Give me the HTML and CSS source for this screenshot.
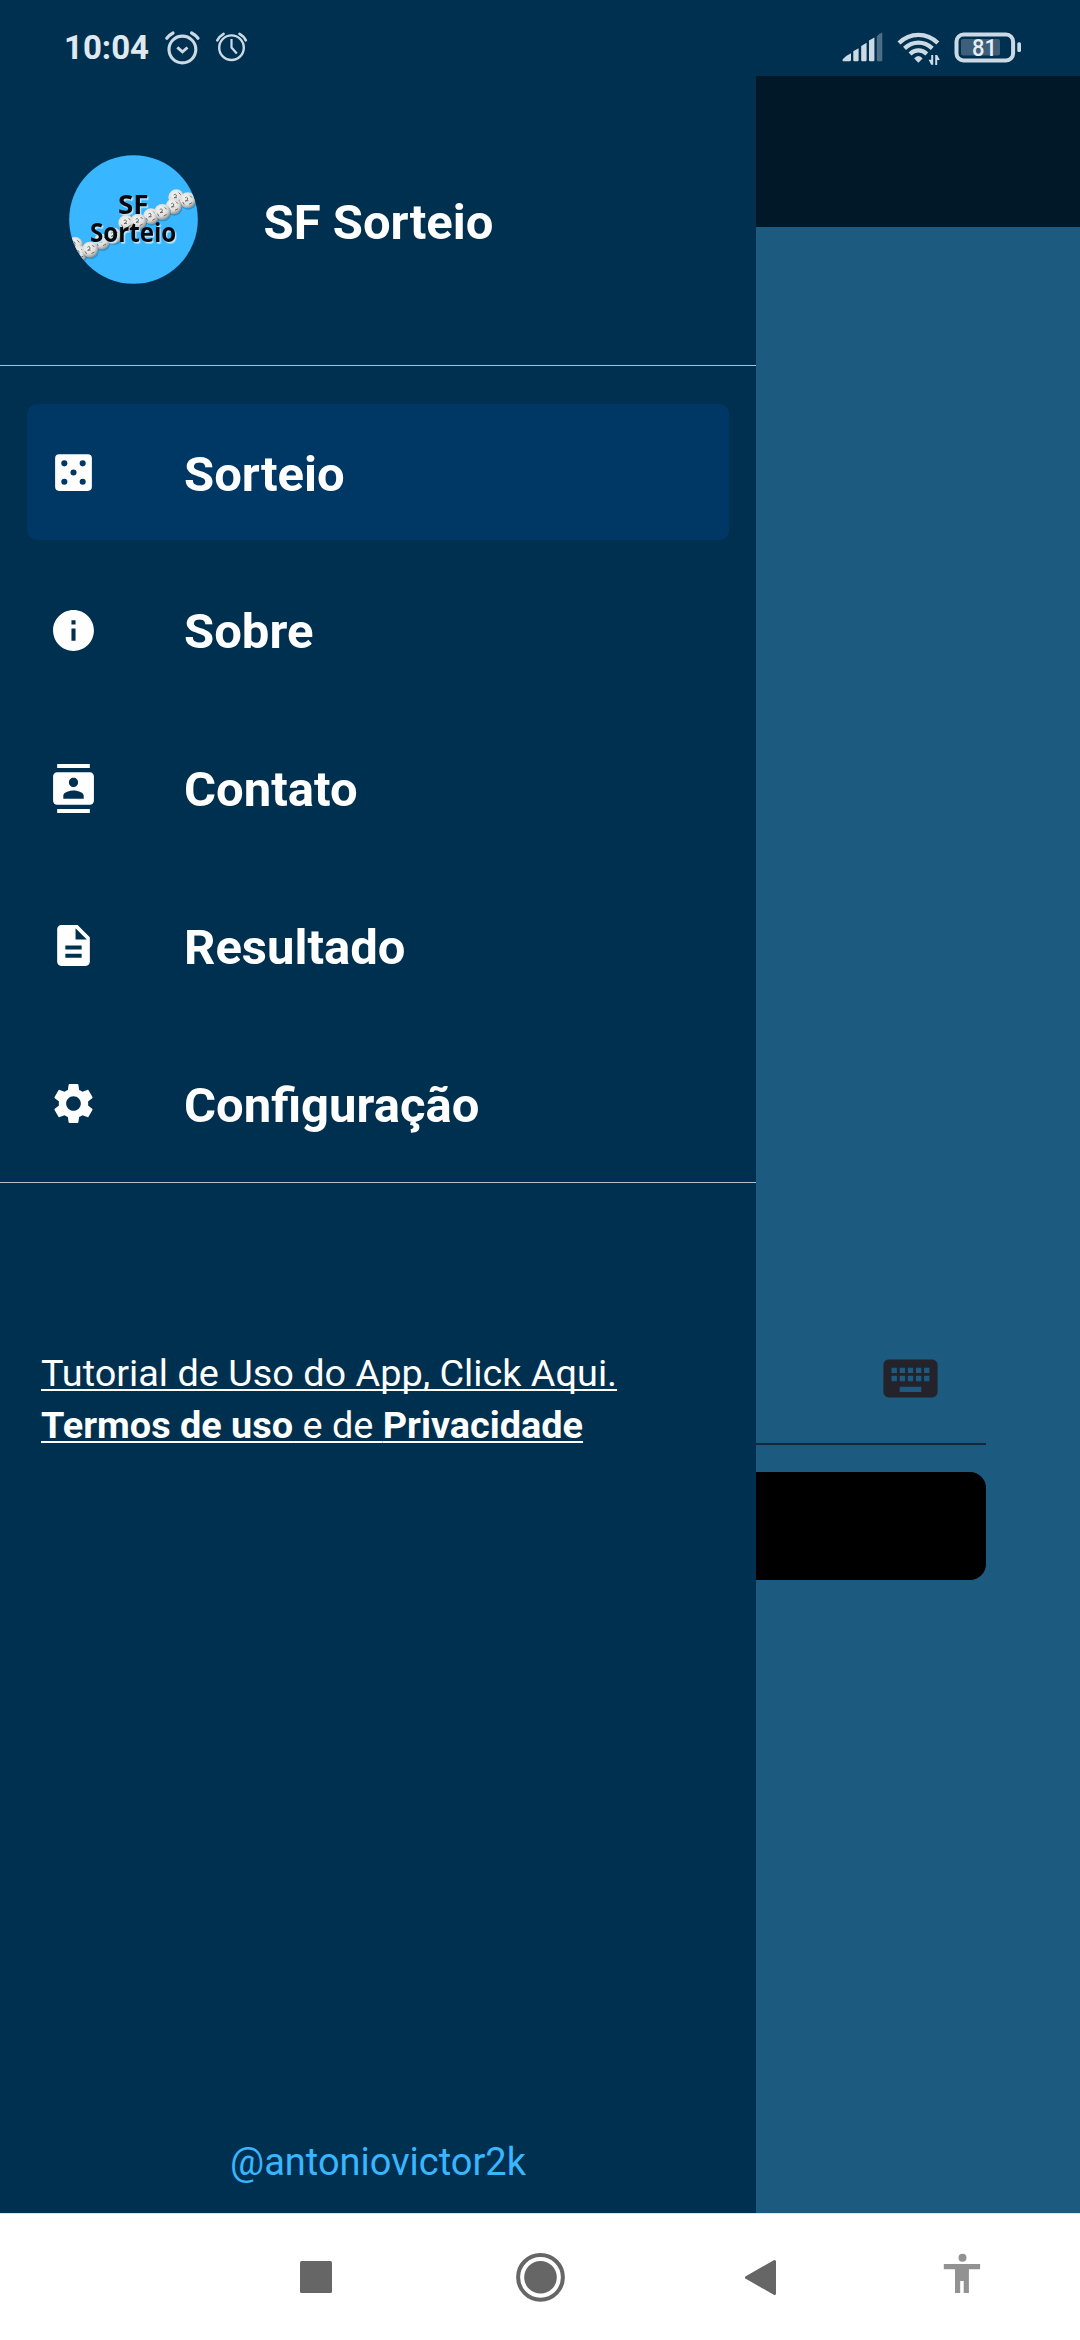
FILE: index.html
```html
<!DOCTYPE html>
<html lang="pt-BR">
<head>
<meta charset="utf-8">
<title>SF Sorteio</title>
<link rel="stylesheet" href="styles.css">
</head>
<body>
<header class="status">
  <span class="clock">10:04</span>
  <svg class="alarms" width="90" height="44" viewBox="160 26 90 44" fill="none" stroke="#ccdae5" stroke-linecap="round">
    <circle cx="182.4" cy="49.5" r="13.4" stroke-width="3.1"/>
    <path d="M177.3 47.3l5.2 4.5 5-4.3" stroke-width="2.9" stroke-linecap="butt"/>
    <path d="M166.8 38.3q2.6-3.4 6.2-5.3M191.6 33q4 2 6.4 5.3" stroke-width="3.2"/>
    <circle cx="231.5" cy="47.7" r="12.3" stroke-width="2.4"/>
    <path d="M231.5 39v8.5l5.3 6" stroke-width="2.2" stroke-linecap="butt"/>
    <path d="M217.3 40.4q2.2-4.2 6.3-6.5M239.5 33.9q4.4 2.3 6.3 6.5" stroke-width="2.6"/>
  </svg>
  <svg class="signals" width="186" height="44" viewBox="840 26 186 44" fill="#ccdae5">
    <path d="M842.7 61.3v-2.1q2.8-3.3 8.3-5.9v6.5q0 1.5-1.5 1.5z"/>
    <path d="M853.3 51.2l5.3-3v12q0 1.1-1 1.1h-3.3q-1 0-1-1.1zM861.2 46l5.4-3.2v17.4q0 1.1-1 1.1h-3.4q-1 0-1-1.1zM869 40.5l5.4-3v22.7q0 1.1-1 1.1h-3.4q-1 0-1-1.1z"/>
    <path d="M876.8 36.5q2.5-3.2 5.5-3.9v27.6q0 1.1-1 1.1h-3.5q-1 0-1-1.1z" fill="#4c6d86"/>
    <g fill="none" stroke="#ccdae5" stroke-width="4.2">
      <path d="M899 43q8.2-8.2 19.4-8.200t19.400 8.200"/>
      <path d="M904.500 48.400q6.200-5.700 13.900-5.700t13.900 5.700"/>
      <path d="M910 54q3.800-3.600 8.400-3.600t8.400 3.600"/>
    </g>
    <path d="M918.400 62.700l-4.200-4.200q1.500-2.600 4.200-2.600t4.200 2.600z"/>
    <path d="M931.200 55v9.800h2V55zM928.600 59.800l2.600 5v-5zM935.200 65h2V55h-2zM937.200 55v5h2.600z"/>
    <rect x="956.500" y="34.500" width="56.600" height="26" rx="7" fill="none" stroke="#ccdae5" stroke-width="4"/>
    <rect x="961" y="39" width="39" height="16.500" rx="2" fill="#3d5f7a"/>
    <rect x="1017.300" y="42.300" width="3.700" height="9.800" rx="1.500"/>
    <text x="972" y="56" class="charge" textLength="25" lengthAdjust="spacingAndGlyphs">81</text>
  </svg>
</header>

<main class="screen">
  <aside class="drawer">
    <div class="brand">
      <svg class="avatar" width="129" height="129" viewBox="0 0 387 387">
        <defs>
          <clipPath id="disc"><circle cx="193.500" cy="193.500" r="193"/></clipPath>
          <radialGradient id="shine" cx=".4" cy=".35" r=".65">
            <stop offset="0" stop-color="#f7f7f5"/><stop offset=".65" stop-color="#dcdcda"/><stop offset="1" stop-color="#929593"/>
          </radialGradient>
          <g id="ball"><circle r="24" cx="2" cy="4" fill="#174f75" opacity=".35"/><circle r="24" fill="url(#shine)"/><path d="M-8-7q5-5 8 0t-7 9l9-1M7-14l6 6M-15 5l5 8M4 12l9-5" fill="none" stroke="#555" stroke-width="2.500"/></g>
        </defs>
        <g clip-path="url(#disc)">
          <rect width="387" height="387" fill="#38b6ff"/>
          <use href="#ball" x="322" y="127"/>
          <use href="#ball" x="356" y="136"/>
          <use href="#ball" x="314" y="154"/>
          <use href="#ball" x="246" y="184"/>
          <use href="#ball" x="280" y="171"/>
          <use href="#ball" x="134" y="242"/>
          <use href="#ball" x="172" y="204"/>
          <use href="#ball" x="208" y="200"/>
          <use href="#ball" x="98" y="260"/>
          <use href="#ball" x="18" y="270"/>
          <use href="#ball" x="30" y="296"/>
          <use href="#ball" x="63" y="284"/>
        </g>
        <g class="logo-text">
          <text x="147" y="177" textLength="92" lengthAdjust="spacingAndGlyphs">SF</text>
          <text x="63" y="262" textLength="259" lengthAdjust="spacingAndGlyphs">Sorteio</text>
        </g>
      </svg>
      <h1 class="brand-name">SF Sorteio</h1>
    </div>

    <nav class="menu">
      <a class="item item-active">
        <svg class="icon" viewBox="0 0 24 24"><path fill-rule="evenodd" d="M19 3H5a2 2 0 0 0-2 2v14a2 2 0 0 0 2 2h14a2 2 0 0 0 2-2V5a2 2 0 0 0-2-2zM7.500 18a1.500 1.500 0 1 1 0-3 1.500 1.500 0 0 1 0 3zm0-9a1.500 1.500 0 1 1 0-3 1.500 1.500 0 0 1 0 3zm4.500 4.500a1.500 1.500 0 1 1 0-3 1.500 1.500 0 0 1 0 3zm4.500 4.500a1.500 1.500 0 1 1 0-3 1.500 1.500 0 0 1 0 3zm0-9a1.500 1.500 0 1 1 0-3 1.500 1.500 0 0 1 0 3z"/></svg>
        <span class="label">Sorteio</span>
      </a>
      <a class="item">
        <svg class="icon" viewBox="0 0 24 24"><path d="M12 2C6.480 2 2 6.480 2 12s4.480 10 10 10 10-4.480 10-10S17.520 2 12 2zm1 15h-2v-6h2v6zm0-8h-2V7h2v2z"/></svg>
        <span class="label">Sobre</span>
      </a>
      <a class="item">
        <svg class="icon" viewBox="0 0 24 24"><path d="M20 0H4v2h16V0zM4 24h16v-2H4v2zM20 4H4c-1.100 0-2 .9-2 2v12c0 1.100.9 2 2 2h16c1.100 0 2-.9 2-2V6c0-1.100-.9-2-2-2zm-8 2.750c1.240 0 2.250 1.010 2.250 2.250s-1.010 2.250-2.250 2.250S9.750 10.240 9.750 9 10.760 6.750 12 6.750zM17 17H7v-1.500c0-1.670 3.330-2.500 5-2.500s5 .83 5 2.500V17z"/></svg>
        <span class="label">Contato</span>
      </a>
      <a class="item">
        <svg class="icon" viewBox="0 0 24 24"><path d="M14 2H6c-1.100 0-1.990.9-1.990 2L4 20c0 1.100.89 2 1.990 2H18c1.100 0 2-.9 2-2V8l-6-6zm2 16H8v-2h8v2zm0-4H8v-2h8v2zm-3-5V3.500L18.500 9H13z"/></svg>
        <span class="label">Resultado</span>
      </a>
      <a class="item">
        <svg class="icon" viewBox="0 0 24 24"><path d="M19.140 12.940c.04-.3.060-.61.060-.94 0-.32-.02-.64-.07-.94l2.030-1.580c.18-.14.230-.41.120-.61l-1.920-3.320c-.12-.22-.37-.29-.59-.22l-2.390.96c-.5-.38-1.030-.7-1.620-.94l-.36-2.540c-.04-.24-.24-.41-.48-.41h-3.840c-.24 0-.43.17-.47.41l-.36 2.540c-.59.240-1.130.570-1.620.940l-2.390-.96c-.22-.08-.47 0-.59.220L2.740 8.870c-.12.210-.08.470.12.610l2.030 1.580c-.05.300-.09.630-.09.940s.02.640.07.940l-2.030 1.580c-.18.140-.23.410-.12.610l1.920 3.320c.12.220.37.290.59.220l2.390-.96c.5.380 1.030.7 1.620.94l.36 2.540c.05.240.24.410.48.410h3.840c.24 0 .44-.17.470-.41l.36-2.540c.59-.24 1.130-.56 1.620-.94l2.390.96c.22.080.47 0 .59-.22l1.920-3.320c.12-.22.070-.47-.12-.61l-2.010-1.580zM12 15.600c-1.980 0-3.600-1.620-3.600-3.600s1.620-3.600 3.600-3.600 3.600 1.620 3.600 3.600-1.620 3.600-3.600 3.600z"/></svg>
        <span class="label">Configuração</span>
      </a>
    </nav>

    <div class="links">
      <a class="link">Tutorial de Uso do App, Click Aqui.</a>
      <a class="link"><b>Termos de uso</b> e de <b>Privacidade</b></a>
    </div>
    <footer class="handle">@antoniovictor2k</footer>
  </aside>

  <section class="page">
    <div class="appbar"></div>
    <div class="field">
      <svg class="keyboard" width="65" height="65" viewBox="0 0 24 24"><path d="M20 5H4c-1.100 0-1.990.9-1.990 2L2 17c0 1.100.9 2 2 2h16c1.100 0 2-.9 2-2V7c0-1.100-.9-2-2-2zm-9 3h2v2h-2V8zm0 3h2v2h-2v-2zM8 8h2v2H8V8zm0 3h2v2H8v-2zm-1 2H5v-2h2v2zm0-3H5V8h2v2zm9 7H8v-2h8v2zm0-4h-2v-2h2v2zm0-3h-2V8h2v2zm3 3h-2v-2h2v2zm0-3h-2V8h2v2z"/></svg>
    </div>
    <div class="button"></div>
  </section>
</main>

<footer class="navbar">
  <svg width="1080" height="126" viewBox="0 2214 1080 126" fill="#666">
    <rect x="300" y="2261" width="32" height="32" rx="1.500"/>
    <circle cx="540.500" cy="2277.300" r="16.300"/>
    <circle cx="540.500" cy="2277.300" r="22.400" fill="none" stroke="#666" stroke-width="4"/>
    <path d="M746.500 2277.500L774.500 2261.500V2293.500Z" stroke="#666" stroke-width="3" stroke-linejoin="round"/>
    <g fill="#929292">
      <circle cx="962.500" cy="2257.800" r="4"/>
      <path d="M943.800 2264h36.300v5.300h-11.200V2293h-5.200v-12h-3.500v12h-5.200v-23.700h-11.200z"/>
    </g>
  </svg>
</footer>
</body>
</html>
```
FILE: styles.css
```css
* { box-sizing: border-box; }

body {
  margin: 0;
  width: 1080px;
  height: 2340px;
  display: flex;
  flex-direction: column;
  overflow: hidden;
  background: #00304f;
  color: #fff;
  font-family: Roboto, "Liberation Sans", sans-serif;
}

svg { display: block; flex: none; }

.status {
  height: 76px;
  padding: 20px 54px 0 64px;
  display: flex;
  align-items: center;
}
.clock {
  width: 96px;
  color: #e0e9f0;
  font-size: 33px;
  font-weight: 700;
  line-height: 44px;
}
.alarms, .signals { align-self: flex-start; margin-top: 6px; }
.signals { margin-left: auto; }
.charge { font: 500 23.5px Roboto, sans-serif; fill: #e6eef4; }

.screen { flex: 1; display: flex; min-height: 0; }

.drawer {
  width: 756px;
  display: flex;
  flex-direction: column;
}
.brand {
  height: 290px;
  padding: 79px 0 0 68.5px;
  display: flex;
  align-items: flex-start;
  gap: 66px;
  border-bottom: 1px solid #b4c1cc;
}
.brand-name {
  margin: 0;
  padding-top: 3px;
  font-size: 49px;
  font-weight: 700;
  line-height: 129px;
}
.logo-text {
  font: 700 82px "Open Sans", sans-serif;
  fill: #05090d;
  filter: drop-shadow(4px 5px 0 #c4e4f7);
}

.menu {
  height: 817px;
  padding: 38px 27px 0;
  display: flex;
  flex-direction: column;
  gap: 21.8px;
  border-bottom: 1px solid #b4c1cc;
}
.item {
  flex: none;
  height: 136px;
  padding-left: 22px;
  display: flex;
  align-items: center;
  gap: 86px;
  border-radius: 10px;
}
.item-active { background: #003865; }
.icon { width: 49px; height: 49px; margin-top: 1px; fill: currentColor; }
.label {
  padding-top: 5px;
  font-size: 49px;
  font-weight: 700;
  line-height: 60px;
}

.links {
  padding: 164px 0 0 41px;
  display: flex;
  flex-direction: column;
  align-items: flex-start;
}
.link {
  font-size: 37.85px;
  line-height: 52px;
  white-space: nowrap;
  text-decoration: underline;
  text-decoration-thickness: 2px;
  text-decoration-skip-ink: none;
  text-underline-offset: 3px;
}

.handle {
  margin-top: auto;
  padding-bottom: 26px;
  color: #38b6ff;
  font-size: 38px;
  line-height: 50px;
  text-align: center;
}

.page {
  flex: 1;
  padding-bottom: 633px;
  display: flex;
  flex-direction: column;
  background: #1c5a80;
}
.appbar { height: 151px; background: #001827; }
.field {
  margin: auto 94px 27.5px 0;
  height: 120px;
  padding: 21px 43px 0 0;
  display: flex;
  justify-content: flex-end;
  border-bottom: 2px solid #102838;
}
.keyboard { fill: #24222a; }
.button {
  height: 108px;
  margin-right: 94px;
  border-radius: 0 16px 16px 0;
  background: #000;
}

.navbar {
  height: 127px;
  border-top: 1px solid #d3e7f3;
  background: #fff;
}
```
